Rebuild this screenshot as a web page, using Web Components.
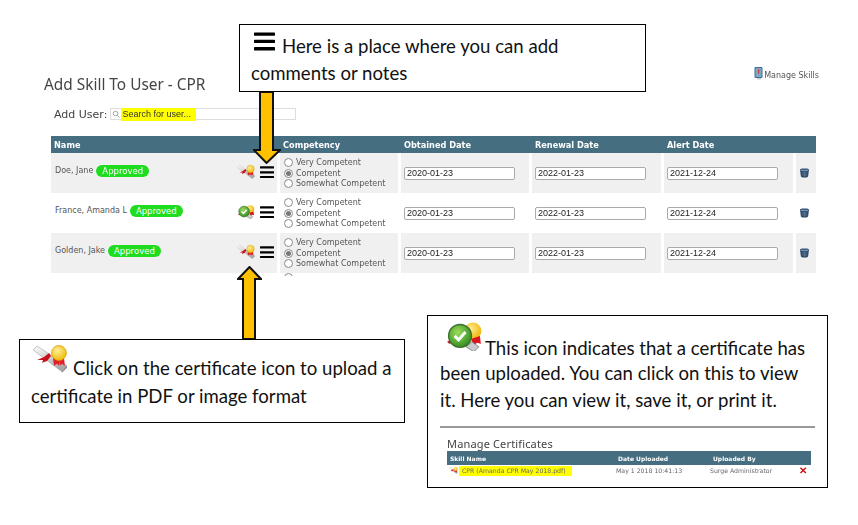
<!DOCTYPE html>
<html>
<head>
<meta charset="utf-8">
<title>Add Skill To User</title>
<style>
  html, body { margin: 0; background: #fff; }
</style>
</head>
<body>
<help-page></help-page>

<script>
class certIcon extends HTMLElement {
  connectedCallback() {
    const check = this.hasAttribute("check");
    const size = this.getAttribute("size") || 18;
    const art = check
      ? `<defs>
           <radialGradient id="g" cx=".4" cy=".35" r=".7"><stop offset="0" stop-color="#9bdc5c"/><stop offset="1" stop-color="#2f8a1e"/></radialGradient>
           <radialGradient id="y" cx=".4" cy=".35" r=".7"><stop offset="0" stop-color="#ffe98a"/><stop offset="1" stop-color="#eeb400"/></radialGradient>
         </defs>
         <circle cx="26" cy="9" r="8.5" fill="url(#y)"/>
         <path d="M24 17l9-3 1 8-4-1-3 3z" fill="#d8141c"/>
         <path d="M19 25l6-5 7 5-5 5z" fill="#c9c9c9" stroke="#777" stroke-width=".8"/>
         <path d="M0 20l4-2 2 3-4 1z" fill="#c8101c"/>
         <circle cx="13" cy="14" r="11.5" fill="url(#g)" stroke="#3c6f2c" stroke-width="1.4"/>
         <path d="M7.5 14l4 4 7-8" fill="none" stroke="#fff" stroke-width="3"/>`
      : `<defs>
           <linearGradient id="s" x1="0" y1="0" x2=".4" y2="1"><stop offset="0" stop-color="#fff"/><stop offset="1" stop-color="#a9a9a9"/></linearGradient>
           <radialGradient id="y" cx=".4" cy=".35" r=".7"><stop offset="0" stop-color="#ffef9a"/><stop offset="1" stop-color="#f0b800"/></radialGradient>
         </defs>
         <path d="M1 5l4-4 30 20-5 6z" fill="url(#s)" stroke="#b5b5b5" stroke-width=".8"/>
         <path d="M30 27l5-6v2l-5 5z" fill="#777"/>
         <path d="M5 15l7-3 5-4 2 3-4 5-5 2 1-3z" fill="#c8101c"/>
         <path d="M21 13l1 8 3-2 2 2 1-7z" fill="#e0202a"/>
         <path d="M27 14l1 7 2-2 3 2-1-9z" fill="#e0202a"/>
         <circle cx="27" cy="8" r="7.5" fill="url(#y)" stroke="#d9a000" stroke-width=".8"/>`;
    this.attachShadow({ mode: "open" }).innerHTML = `
      <style>
        :host { display: inline-block; line-height: 0; }
      </style>
      <svg width="${size}" height="${size * 0.8}" viewBox="0 0 36 29">${art}</svg>`;
  }
}
customElements.define("cert-icon", certIcon);

class menuIcon extends HTMLElement {
  connectedCallback() {
    const w = this.getAttribute("size") || 14;
    this.attachShadow({ mode: "open" }).innerHTML = `
      <style>:host { display: inline-block; line-height: 0; }</style>
      <svg width="${w}" height="${w * 0.9}" viewBox="0 0 20 18">
        <path d="M1 2h18M1 9h18M1 16h18" stroke="#000" stroke-width="3.2" stroke-linecap="round"/>
      </svg>`;
  }
}
customElements.define("menu-icon", menuIcon);

class trashIcon extends HTMLElement {
  constructor() {
    super();
    this.attachShadow({ mode: "open" }).innerHTML = `
      <style>:host { display: inline-block; line-height: 0; }</style>
      <svg width="9" height="10" viewBox="0 0 10 11">
        <path d="M0 1.5L2 .5h6l2 1-1 8-1.5 1h-5L1 9.5z" fill="#2c4a6e"/>
        <path d="M1 2.5h8" stroke="#9db0c6" stroke-width="1"/>
        <path d="M3.3 4v5M5 4v5M6.7 4v5" stroke="#7d93ad" stroke-width=".6"/>
      </svg>`;
  }
}
customElements.define("trash-icon", trashIcon);

class skillRow extends HTMLElement {
  connectedCallback() {
    const done = this.hasAttribute("uploaded");
    const name = this.getAttribute("name");
    this.attachShadow({ mode: "open" }).innerHTML = `
      <style>
        :host {
          display: grid;
          grid-template-columns: 226px 118px 128px 129px 129px 1fr;
          column-gap: 3px;
          height: 40px;
          background: #fff;
          font: 8px "DejaVu Sans", sans-serif;
          color: #555;
        }
        :host([shade]) .cell { background: #f0f0f0; }
        .cell { display: flex; align-items: center; min-width: 0; background: #fff; }
        .who { padding: 0 3px 5px 4px; }
        .who .tools { margin: 3px 0 0 auto; display: flex; align-items: center; gap: 5px; }
        .badge {
          background: #1fdc1f; color: #fff; border-radius: 8px;
          padding: 1px 6px; margin-left: 3px; line-height: 10px; font-size: 8.5px;
        }
        .comp { flex-direction: column; align-items: flex-start; justify-content: center; padding: 0 0 0 4px; }
        .comp label { display: flex; align-items: center; height: 10.5px; gap: 3px; }
        .radio {
          width: 7px; height: 7px; border: 1px solid #8a8a8a; border-radius: 50%; background: #fff;
          display: inline-block; position: relative;
        }
        .radio.on::after {
          content: ""; position: absolute; inset: 1px; background: #777; border-radius: 50%;
        }
        .date { padding: 1px 0 0 3px; }
        .field {
          width: 107px; height: 11px; border: 1px solid #aaa; border-radius: 2px; background: #fff;
          font: 9px/11px "Liberation Sans", sans-serif; color: #222; padding-left: 2px; box-sizing: content-box;
        }
        .bin { justify-content: center; padding: 0 3px 1px 0; }
      </style>
      <div class="cell who">
        <span>${name}</span><span class="badge">Approved</span>
        <span class="tools">
          <cert-icon size="${done ? 17 : 18}" ${done ? "check" : ""}></cert-icon>
          <menu-icon></menu-icon>
        </span>
      </div>
      <div class="cell comp">
        <label><i class="radio"></i>Very Competent</label>
        <label><i class="radio on"></i>Competent</label>
        <label><i class="radio"></i>Somewhat Competent</label>
      </div>
      <div class="cell date"><div class="field">2020-01-23</div></div>
      <div class="cell date"><div class="field">2022-01-23</div></div>
      <div class="cell date"><div class="field">2021-12-24</div></div>
      <div class="cell bin"><trash-icon></trash-icon></div>`;
  }
}
customElements.define("skill-row", skillRow);

class skillTable extends HTMLElement {
  constructor() {
    super();
    this.attachShadow({ mode: "open" }).innerHTML = `
      <style>
        :host { display: block; }
        .head {
          display: grid;
          grid-template-columns: 226px 118px 128px 129px 129px 1fr;
          column-gap: 3px;
          height: 17px;
          align-items: center;
          background: #456e80;
          color: #fff;
          font: bold 8.2px "DejaVu Sans", sans-serif;
        }
        .head span { padding-left: 3px; }
        .cut { height: 3px; overflow: hidden; padding-left: 233px; }
        .cut i { display: block; width: 7px; height: 7px; border: 1px solid #8a8a8a; border-radius: 50%; }
      </style>
      <div class="head">
        <span>Name</span><span>Competency</span><span>Obtained Date</span>
        <span>Renewal Date</span><span>Alert Date</span><span></span>
      </div>
      <slot></slot>
      <div class="cut"><i></i></div>`;
  }
}
customElements.define("skill-table", skillTable);

class callOut extends HTMLElement {
  constructor() {
    super();
    this.attachShadow({ mode: "open" }).innerHTML = `
      <style>
        :host {
          display: block;
          position: absolute;
          box-sizing: border-box;
          background: #fff;
          border: 1px solid #000;
          font: 18.6px/27px Lato, "Open Sans", sans-serif;
          color: #111;
          white-space: nowrap;
        }
      </style>
      <slot></slot>`;
  }
}
customElements.define("call-out", callOut);

class blockArrow extends HTMLElement {
  connectedCallback() {
    const up = this.hasAttribute("up");
    const points = up
      ? "12.5,1 24,13 18,13 18,73 6,73 6,13 1,13"
      : "7,0 20,0 20,58 27,58 13.5,71 0.8,58 7,58";
    this.attachShadow({ mode: "open" }).innerHTML = `
      <style>:host { position: absolute; line-height: 0; }</style>
      <svg width="${up ? 25 : 28}" height="${up ? 74 : 72}">
        <polygon points="${points}" fill="#ffc000" stroke="#111" stroke-width="2"/>
      </svg>`;
  }
}
customElements.define("block-arrow", blockArrow);

class certTable extends HTMLElement {
  constructor() {
    super();
    this.attachShadow({ mode: "open" }).innerHTML = `
      <style>
        :host {
          display: block;
          margin: 12px 12px 0 12px;
          padding: 9px 0 0 7px;
          border-top: 2px solid #999;
          filter: blur(.35px);
          white-space: nowrap;
        }
        h2 { margin: 0; font: 400 11px/14px "Noto Sans", sans-serif; color: #444; letter-spacing: .15px; }
        .row { display: grid; grid-template-columns: 168px 95px 1fr 14px; align-items: center; }
        .head { height: 14px; margin-right: 4px; background: #456e80; color: #fff; font: bold 6px "DejaVu Sans", sans-serif; padding-left: 3px; }
        .item { height: 11px; font: 6.2px "DejaVu Sans", sans-serif; color: #666; margin-right: 2px; padding-left: 3px; }
        .name { display: flex; align-items: center; gap: 1px; margin-left: -1px; }
        mark { background: #ffff00; color: #666; padding: 0 6px 0 3px; line-height: 10px; }
        .x { color: #d01010; font: bold 10px "Liberation Sans", sans-serif; }
      </style>
      <h2>Manage Certificates</h2>
      <div class="row head"><span>Skill Name</span><span>Date Uploaded</span><span>Uploaded By</span><span></span></div>
      <div class="row item">
        <span class="name"><cert-icon size="9"></cert-icon><mark>CPR (Amanda CPR May 2018.pdf)</mark></span>
        <span style="margin-left:-2px">May 1 2018 10:41:13</span><span style="margin-left:-3px">Surge Administrator</span><span class="x">✕</span>
      </div>`;
  }
}
customElements.define("cert-table", certTable);

class helpPage extends HTMLElement {
  constructor() {
    super();
    this.attachShadow({ mode: "open" }).innerHTML = `
      <style>
        :host { display: block; position: relative; width: 858px; height: 525px; overflow: hidden; background: #fff; }
        .shot { padding: 75px 42px 0 51px; filter: blur(.35px); }
        .top { display: flex; justify-content: space-between; align-items: flex-start; }
        h1 { margin: 0 0 0 -7px; font: 400 15.4px/20px "Noto Sans", sans-serif; color: #444; }
        .manage { display: flex; align-items: flex-end; font: 8px "DejaVu Sans", sans-serif; color: #555; margin: -8px -3px 0 0; }
        .manage svg { margin-right: 1px; }
        .add { display: flex; align-items: center; height: 14px; margin: 12px 0 15px 3px; font: 11px "DejaVu Sans", sans-serif; color: #444; }
        .search {
          display: flex; align-items: center; width: 184px; height: 10px; margin-left: 3px;
          border: 1px solid #ddd; background: #fff; font: 9px "Liberation Sans", sans-serif; color: #333;
        }
        .search svg { margin: 0 1px 0 1px; }
        mark { background: #ffff00; color: #333; padding: 1px 5px 1px 1px; line-height: 11px; }
        .b1 { left: 239px; top: 24px; width: 407px; height: 68px; padding: 0 0 0 11px; }
        .b2 { left: 19px; top: 339px; width: 386px; height: 84px; padding: 0 0 0 11px; }
        .b3 { left: 427px; top: 315px; width: 401px; height: 173px; padding: 0; }
        .l1 { display: flex; align-items: flex-end; }
        .l1 span { line-height: 20px; }
        .l1 cert-icon { align-self: flex-start; }
        .b1 .l1 { gap: 7px; margin: 5px 0 0 3px; height: 26px; }
        .b1 .t { margin-top: 3.5px; }
        .b1 menu-icon { margin-bottom: 5px; }
        .b2 .l1 { gap: 5px; margin: 5px 0 0 1px; height: 33px; }
        .b2 .t { margin-top: 4.5px; }
        .b3 .l1 { gap: 2px; margin: 6px 0 0 19px; height: 36px; }
        .b3 .t { padding-left: 12px; }
        .b3 .t.first { margin-top: 2px; }
      </style>

      <div class="shot">
        <div class="top">
          <h1>Add Skill To User - CPR</h1>
          <div class="manage">
            <svg width="9" height="13" viewBox="0 0 9 13"><path d="M1 .5h7v10H1z" fill="#7fa7c4" stroke="#3f6f95"/><path d="M4 2.5h1.2v4H4z" fill="#c33"/><path d="M3 11v1.5h4V11" fill="#ccc"/></svg>Manage Skills
          </div>
        </div>
        <div class="add">Add User:
          <div class="search">
            <svg width="8" height="8" viewBox="0 0 9 9"><circle cx="4" cy="4" r="2.6" fill="none" stroke="#999"/><path d="M6 6l2.5 2.5" stroke="#999"/></svg>
            <mark>Search for user...</mark>
          </div>
        </div>
        <skill-table>
          <skill-row shade name="Doe, Jane"></skill-row>
          <skill-row uploaded name="France, Amanda L"></skill-row>
          <skill-row shade name="Golden, Jake"></skill-row>
        </skill-table>
      </div>

      <block-arrow style="left:253px;top:92px"></block-arrow>
      <block-arrow up style="left:237px;top:266px"></block-arrow>

      <call-out class="b1">
        <div class="l1"><menu-icon size="21"></menu-icon><span>Here is a place where you can add</span></div>
        <div class="t">comments or notes</div>
      </call-out>

      <call-out class="b2">
        <div class="l1"><cert-icon size="36"></cert-icon><span>Click on the certificate icon to upload a</span></div>
        <div class="t">certificate in PDF or image format</div>
      </call-out>

      <call-out class="b3">
        <div class="l1"><cert-icon size="36" check></cert-icon><span>This icon indicates that a certificate has</span></div>
        <div class="t first">been uploaded. You can click on this to view</div>
        <div class="t">it. Here you can view it, save it, or print it.</div>
        <cert-table></cert-table>
      </call-out>`;
  }
}
customElements.define("help-page", helpPage);
</script>
</body>
</html>
